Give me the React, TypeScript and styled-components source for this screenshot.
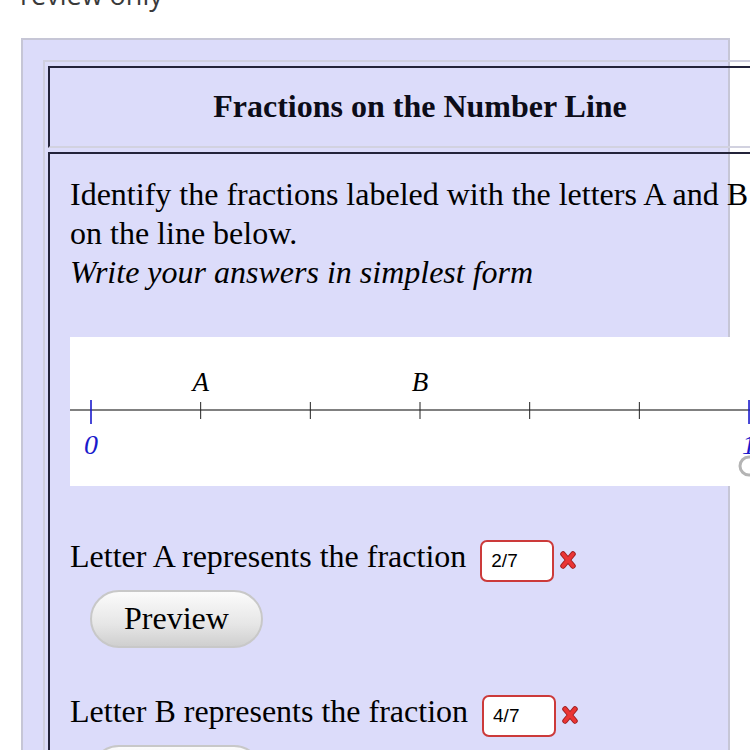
import React from "react";
import styled, { createGlobalStyle } from "styled-components";

const GlobalStyle = createGlobalStyle`
  html, body {
    margin: 0;
    padding: 0;
    background: #ffffff;
  }
  body {
    font-family: "Liberation Serif", "Times New Roman", serif;
    color: #000;
  }
`;

const Page = styled.div`
  width: 750px;
  height: 750px;
  overflow: hidden;
`;

const Banner = styled.div`
  margin: -23px 0 0 20px;
  font-family: "Open Sans", "Noto Sans", sans-serif;
  font-size: 27px;
  line-height: 36px;
  color: #3a3a3a;
  white-space: nowrap;
`;

const ProblemPanel = styled.div`
  margin: 25px 0 0 21px;
  width: 665px;
  padding: 20px;
  background: #dcdcfa;
  border: 2px solid #c6c6d6;
  border-bottom: none;
`;

const ProblemTable = styled.div`
  display: flex;
  flex-direction: column;
  gap: 4px;
  width: 760px;
  padding: 4px 0 0 3px;
  border-top: 2px solid #cfcfdf;
  border-left: 2px solid #cfcfdf;
`;

const Cell = styled.div`
  width: 740px;
  border-top: 2px solid #23233a;
  border-left: 2px solid #23233a;
  border-bottom: 2px solid #d2d2e0;
`;

const TitleCell = styled(Cell)`
  height: 78px;
  display: flex;
  align-items: center;
  justify-content: center;
`;

const Title = styled.h1`
  margin: 0 0 2px 0;
  font-size: 32px;
  font-weight: bold;
  color: #0c0c18;
`;

const BodyCell = styled(Cell)`
  padding: 21px 20px 0 20px;
  width: 700px;
  border-bottom: none;
`;

const Prompt = styled.p`
  margin: 0;
  font-size: 32px;
  line-height: 39px;
`;

const Hint = styled.em`
  font-style: italic;
`;

const LineBox = styled.div`
  margin-top: 45px;
  height: 149px;
  background: #ffffff;
`;

const AnswerBlock = styled.div<{ $gap: number }>`
  margin-top: ${({ $gap }) => $gap}px;
`;

const AnswerRow = styled.div`
  display: flex;
  align-items: baseline;
  font-size: 32px;
  line-height: 39px;
  white-space: nowrap;
`;

const AnswerInput = styled.input`
  margin-left: 14px;
  width: 74px;
  height: 42px;
  box-sizing: border-box;
  padding: 0 9px;
  border: 2px solid #cc3a3a;
  border-radius: 7px;
  background: #ffffff;
  font-family: "Liberation Sans", Arial, sans-serif;
  font-size: 19px;
  color: #000;
  outline: none;
`;

const Mark = styled.span`
  display: inline-flex;
  align-self: flex-end;
  margin: 0 0 13px 6px;
`;

const PreviewButton = styled.button`
  display: block;
  margin: 8px 0 0 20px;
  width: 173px;
  height: 58px;
  border: 2px solid #c8c8c8;
  border-radius: 29px;
  background: linear-gradient(#fbfbfb, #e6e6e6 60%, #cfcfcf);
  font-family: "Liberation Serif", "Times New Roman", serif;
  font-size: 32px;
  color: #000;
  padding: 0 0 2px 0;
`;

const WrongMark = () => (
  <Mark>
    <svg width="16" height="18" viewBox="0 0 16 18">
      <g strokeLinecap="round">
        <path d="M3 3 L13 15 M13 3 L3 15" stroke="#9e1f1f" strokeWidth="5.5" />
        <path d="M3 3 L13 15 M13 3 L3 15" stroke="#ea3434" strokeWidth="3.6" />
      </g>
    </svg>
  </Mark>
);

const ticks = [0, 1, 2, 3, 4, 5, 6];
const step = 109.67;
const x0 = 21;

const NumberLine = () => (
  <LineBox>
    <svg width="700" height="149" viewBox="0 0 700 149">
      <line x1="0" y1="73" x2="700" y2="73" stroke="#808080" strokeWidth="2" />
      {ticks.map((i) => {
        const x = x0 + i * step;
        const end = i === 0 || i === 6;
        return end ? (
          <line key={i} x1={x} y1="63" x2={x} y2="87" stroke="#1a1acc" strokeWidth="1.6" />
        ) : (
          <line key={i} x1={x} y1="65" x2={x} y2="82" stroke="#222" strokeWidth="1" />
        );
      })}
      <g fontFamily="Liberation Serif, serif" fontStyle="italic" textAnchor="middle">
        <text x={x0 + step} y="54" fontSize="27" fill="#000">A</text>
        <text x={x0 + 3 * step} y="54" fontSize="27" fill="#000">B</text>
        <text x={x0} y="117" fontSize="28" fill="#1a1acc">0</text>
        <text x={x0 + 6 * step} y="117" fontSize="28" fill="#1a1acc">1</text>
      </g>
      <circle cx="679" cy="129" r="9" fill="none" stroke="#b4b4b4" strokeWidth="3" />
    </svg>
  </LineBox>
);

export default function App() {
  return (
    <Page>
      <GlobalStyle />
      <Banner>review only</Banner>
      <ProblemPanel>
        <ProblemTable>
          <TitleCell>
            <Title>Fractions on the Number Line</Title>
          </TitleCell>
          <BodyCell>
            <Prompt>
              Identify the fractions labeled with the letters A and B on the line below.
              <br />
              <Hint>Write your answers in simplest form</Hint>
            </Prompt>
            <NumberLine />
            <AnswerBlock $gap={51}>
              <AnswerRow>
                Letter A represents the fraction
                <AnswerInput defaultValue="2/7" />
                <WrongMark />
              </AnswerRow>
              <PreviewButton>Preview</PreviewButton>
            </AnswerBlock>
            <AnswerBlock $gap={44}>
              <AnswerRow>
                Letter B represents the fraction
                <AnswerInput defaultValue="4/7" />
                <WrongMark />
              </AnswerRow>
              <PreviewButton>Preview</PreviewButton>
            </AnswerBlock>
          </BodyCell>
        </ProblemTable>
      </ProblemPanel>
    </Page>
  );
}
